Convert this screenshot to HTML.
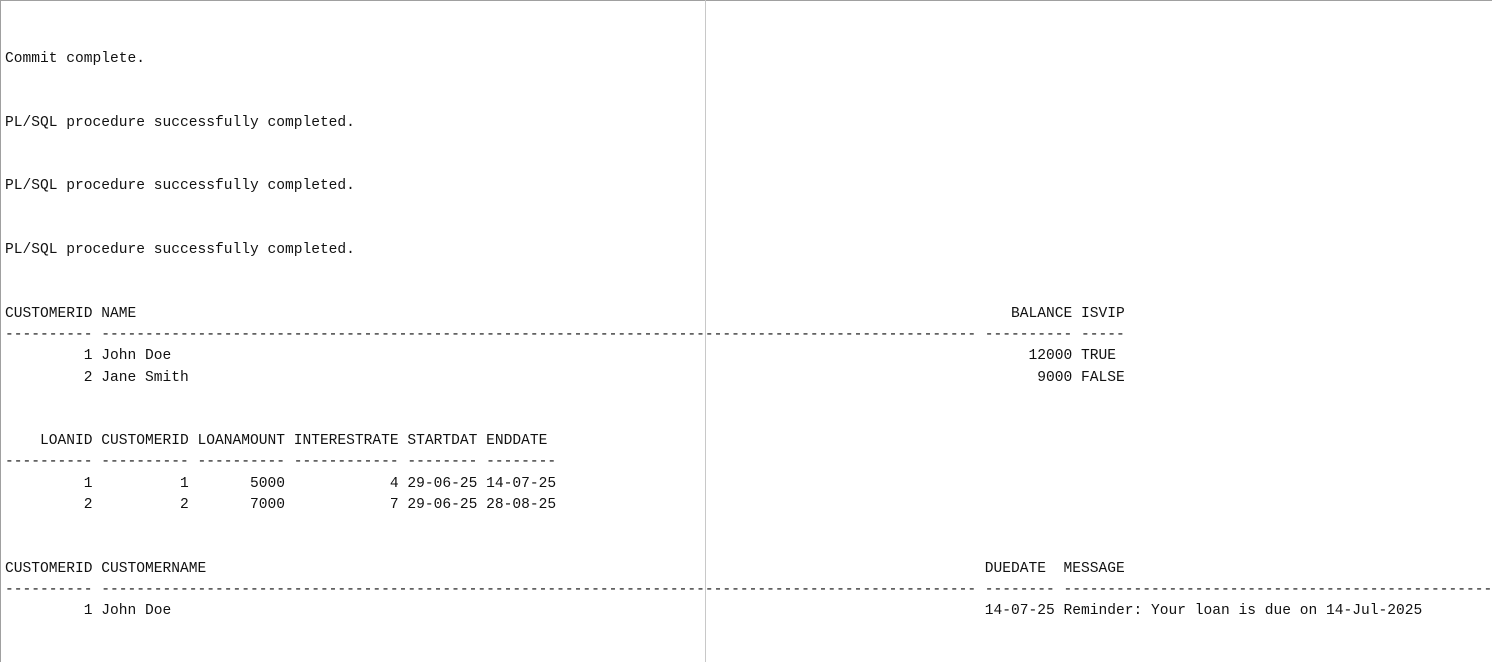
<!DOCTYPE html>
<html><head><meta charset="utf-8"><style>
html,body{margin:0;padding:0;background:#fff;width:1492px;height:662px;overflow:hidden;position:relative}
.top{position:absolute;left:0;top:0;width:1492px;height:1px;background:#a0a0a0}
.left{position:absolute;left:0;top:0;width:1px;height:662px;background:#a0a0a0}
.v{position:absolute;left:705px;top:0;width:1px;height:662px;background:#c8c8c8}
pre{position:absolute;left:5px;top:49px;margin:0;font-family:"Liberation Mono","Courier New",monospace;font-size:14.58px;line-height:21.23px;color:#111;white-space:pre}
</style></head><body>
<div class="top"></div><div class="left"></div><div class="v"></div>
<pre>Commit complete.


PL/SQL procedure successfully completed.


PL/SQL procedure successfully completed.


PL/SQL procedure successfully completed.


CUSTOMERID NAME                                                                                                    BALANCE ISVIP
---------- ---------------------------------------------------------------------------------------------------- ---------- -----
         1 John Doe                                                                                                  12000 TRUE
         2 Jane Smith                                                                                                 9000 FALSE


    LOANID CUSTOMERID LOANAMOUNT INTERESTRATE STARTDAT ENDDATE
---------- ---------- ---------- ------------ -------- --------
         1          1       5000            4 29-06-25 14-07-25
         2          2       7000            7 29-06-25 28-08-25


CUSTOMERID CUSTOMERNAME                                                                                         DUEDATE  MESSAGE
---------- ---------------------------------------------------------------------------------------------------- -------- ------------------------------------------------------
         1 John Doe                                                                                             14-07-25 Reminder: Your loan is due on 14-Jul-2025</pre>
</body></html>
